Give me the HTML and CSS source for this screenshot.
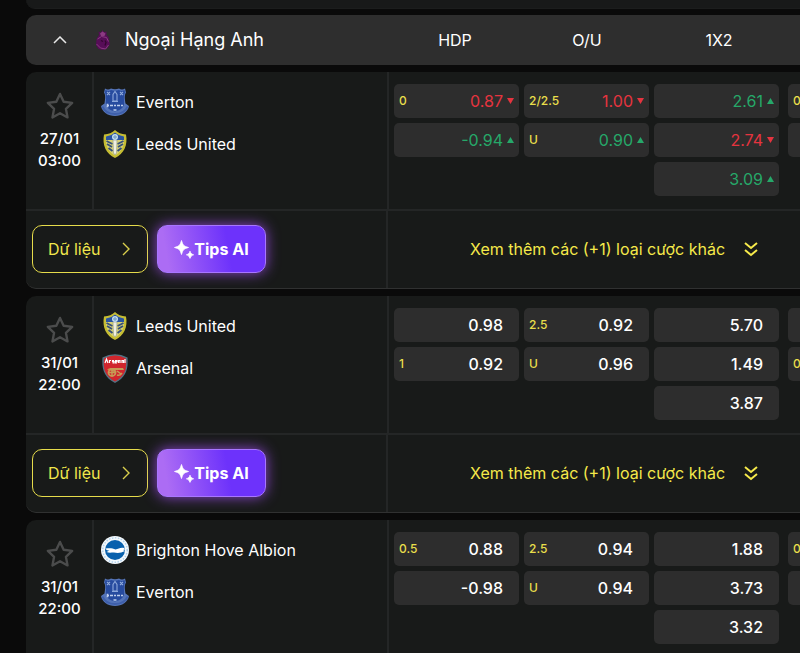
FILE: index.html
```
<!DOCTYPE html>
<html lang="vi">
<head>
<meta charset="utf-8">
<title>Ngoại Hạng Anh</title>
<link rel="stylesheet" href="styles.css">
</head>
<body>
<svg class="sprite" aria-hidden="true">
  <defs>
    <symbol id="star" viewBox="0 0 26 26"><path d="M13 1.800l3.400 7.300 7.900 1-5.800 5.500 1.500 8L13 19.700l-7 3.900 1.500-8L1.700 10.100l7.900-1z" fill="none" stroke="#4b4c4c" stroke-width="2.200" stroke-linejoin="round"/></symbol>
    <symbol id="up" viewBox="0 0 7 7"><path d="M3.500 0L7 6H0z"/></symbol>
    <symbol id="down" viewBox="0 0 7 7"><path d="M3.500 6L7 0H0z"/></symbol>
    <symbol id="right" viewBox="0 0 8 14"><path d="M1 1l6 6-6 6" fill="none" stroke="#d9cf4c" stroke-width="1.400"/></symbol>
    <symbol id="more" viewBox="0 0 14 16"><path d="M1 2l6 5 6-5M1 9l6 5 6-5" fill="none" stroke="#f5e94a" stroke-width="2"/></symbol>
    <symbol id="sparkle" viewBox="0 0 20 20"><path d="M7.500 1.500c1.300 4.600 2.400 5.700 7 7-4.600 1.300-5.700 2.400-7 7-1.300-4.600-2.400-5.700-7-7 4.600-1.300 5.700-2.400 7-7zM16 12.200c.8 2.200 1.400 2.800 3.600 3.600-2.200.8-2.800 1.400-3.600 3.600-.8-2.200-1.400-2.800-3.600-3.600 2.200-.8 2.800-1.400 3.600-3.600z" fill="#fff" stroke="#fff" stroke-width=".8" stroke-linejoin="round"/></symbol>
    <symbol id="everton" viewBox="0 0 30 30">
      <path d="M5 1.500q3 2 6 0 4 1.500 8 0 3 2 6 0l1 4c-2 3-1 7-.5 11l3.500 2.500c-1 6-7 10-14 10s-13-4-14-10l3.500-2.500C5 12.500 6 8.500 4 5.500z" fill="#5474b8"/>
      <path d="M5.500 3q3 2 5.500 0 4 1.600 8 0 2.500 2 5.500 0l.5 2.500c-2 4-.5 8-1 12-1 4-5 6-9 7-4-1-8-3-9-7-.5-4 1-8-1-12z" fill="#274b9f"/>
      <path d="M2.500 19.500c2 5 7 7.500 12.500 7.500s10.500-2.500 12.500-7.500" fill="none" stroke="#3e5fab" stroke-width="2"/>
      <path d="M13 14V7.500L15 4.500l2 3V14zM12 14.500h6M7 5l3 3M10 5L7 8m13-3l3 3m0-3l-3 3" fill="none" stroke="#8ea8da" stroke-width="1.100"/>
      <path d="M7 18.500h2m1 0h3m1 0h2m1 0h3m1 0h2M7.500 16.800v3.400m6 2.800h3" fill="none" stroke="#c0cfec" stroke-width="1.700"/>
    </symbol>
    <symbol id="leeds" viewBox="0 0 30 30">
      <path d="M4 5.500Q11 5 15 1q4 4 11 4.500C28 16 24 25 15 29 6 25 2 16 4 5.500z" fill="#c5bd32"/>
      <path d="M6 7.500Q11 7 15 3.500q4 3.500 9 4C25 15 22 23 15 26.500 8 23 5 15 6 7.500z" fill="#d8d173"/>
      <path d="M6 7.500Q11 7 15 3.500q4 3.500 9 4v3.500H6z" fill="#2a55a0"/>
      <path d="M6.500 12l6 3M7 15l5 3M8.500 19l4 3M23.500 12l-6 3M23 15l-5 3M21.500 19l-4 3" stroke="#35507b" stroke-width="1.900"/>
      <path d="M13 11h4l-.5 13-1.500 2-1.500-2z" fill="#efefe2" stroke="#8e9a82" stroke-width=".6"/>
      <circle cx="15" cy="8" r="3" fill="#c6def0"/><path d="M15 6v4m-2-2h4" stroke="#6997be"/>
    </symbol>
    <symbol id="arsenal" viewBox="0 0 30 30">
      <path d="M2.500 4.500Q15-2 27.500 4.500C28.500 16 26 24.500 15 30 4 24.500 1.500 16 2.500 4.500z" fill="#527384"/>
      <path d="M4 5.500Q15-.5 26 5.500C27 16 25 23 15 28.500 5 23 3 16 4 5.500z" fill="#d0262d"/>
      <path d="M5 10l1.500-4L8 10M9.500 10V7.500h1.500M14 7.500h-1.500v1.200H14V10h-1.500M15.500 8.700H17V7.500h-1.500V10H17M18.500 10V7.500H20V10M22 10V7.500h1.500V10M25 6v4" fill="none" stroke="#fff" stroke-width="1.200"/>
      <path d="M7 16.500q2-2 6-1.500h10l1 2H13l4 1-3 1-3-1.500z" fill="#c69b55"/>
      <circle cx="12" cy="19.500" r="3.500" fill="none" stroke="#c69b55" stroke-width="1.800"/>
      <path d="M12 16v7m-3.500-3.500h7M17 18l4 3m-4 1q3 1 5-2" fill="none" stroke="#c69b55" stroke-width="1.500"/>
    </symbol>
    <symbol id="brighton" viewBox="0 0 30 30">
      <circle cx="15" cy="15" r="14" fill="#f4f9fd"/><circle cx="15" cy="15" r="12.200" fill="none" stroke="#b3d3ec" stroke-width="1.500" stroke-dasharray="1.500 1.500"/>
      <circle cx="15" cy="15" r="10" fill="#0961ad"/>
      <path d="M5.500 13.500c4-.5 7-.5 10 1 3-.5 5-2.500 8.500-1.500l1 1.500-2 .5 2 1c-4 2-7 2.500-11 1.500-3 0-5 .5-7.500-.5l3-1.500c-2 0-3.500-.5-4-2z" fill="#fff"/>
    </symbol>
    <symbol id="lion" viewBox="0 0 18 22">
      <path d="M5 6L4.500 2.500l2.500 1L8.500 1l1.500 2.300 2.500-.8v3.500l2 2 .5 4 1 3-3 4.500-4 1.500-4.500-1-2.500-4 .5-6z" fill="#570d58"/>
      <path d="M6 4.500l2.500-2 3 2-1 2.500H7z" fill="#8b3b82"/>
      <path d="M3.500 10l4-2.500 5 1 2 4M2.500 15l4 4 5 1 3-4" fill="none" stroke="#8b3b82" stroke-width="1"/>
      <path d="M7 11.500l2 1m2-1l1 2-1 3" fill="none" stroke="#32082f" stroke-width="1.300"/>
    </symbol>
  </defs>
</svg>
<main class="board" id="board"></main>
<script src="board.js"></script>
</body>
</html>
```
FILE: board.js
```
const matches = [
  { day: "27/01", time: "03:00", teams: [["everton", "Everton"], ["leeds", "Leeds United"]],
    odds: [[["0", "0.87", "down"], ["", "-0.94", "up"]],
           [["2/2.5", "1.00", "down"], ["U", "0.90", "up"]],
           [["", "2.61", "up"], ["", "2.74", "down"], ["", "3.09", "up"]],
           [["0", ""], ["", ""]]] },
  { day: "31/01", time: "22:00", teams: [["leeds", "Leeds United"], ["arsenal", "Arsenal"]],
    odds: [[["", "0.98"], ["1", "0.92"]],
           [["2.5", "0.92"], ["U", "0.96"]],
           [["", "5.70"], ["", "1.49"], ["", "3.87"]],
           [["", ""], ["0", ""]]] },
  { day: "31/01", time: "22:00", teams: [["brighton", "Brighton Hove Albion"], ["everton", "Everton"]],
    odds: [[["0.5", "0.88"], ["", "-0.98"]],
           [["2.5", "0.94"], ["U", "0.94"]],
           [["", "1.88"], ["", "3.73"], ["", "3.32"]],
           [["0", ""], ["", ""]]] }
];

const icon = (id, cls) => `<svg class="${cls}" aria-hidden="true"><use href="#${id}"/></svg>`;

const cell = ([line, price, move]) =>
  `<button class="odd ${move || ""}"><span class="line">${line}</span><span class="price">${price}</span><span class="move">${move ? icon(move, "arrow") : ""}</span></button>`;

const card = m => `
<article class="card">
  <div class="match">
    <div class="when"><button class="fav" aria-label="Yêu thích">${icon("star", "star")}</button><time>${m.day}<br>${m.time}</time></div>
    <ul class="teams">${m.teams.map(([id, name]) => `<li>${icon(id, "crest")}${name}</li>`).join("")}</ul>
    <div class="odds">${m.odds.map(g => `<div class="group">${g.map(cell).join("")}</div>`).join("")}</div>
  </div>
  <div class="actions">
    <div class="buttons">
      <button class="data">Dữ liệu${icon("right", "chevron")}</button>
      <button class="tips">${icon("sparkle", "sparkle")}Tips AI</button>
    </div>
    <a class="more" href="#board">Xem thêm các (+1) loại cược khác${icon("more", "double")}</a>
  </div>
</article>`;

document.getElementById("board").innerHTML = `
<div class="previous"></div>
<header class="league">
  <button class="collapse" aria-label="Thu gọn"><svg class="caret" viewBox="0 0 14 8"><path d="M1 7l6-6 6 6" fill="none" stroke="#e8e8e8" stroke-width="1.500"/></svg></button>
  <h1>${icon("lion", "lion")}Ngoại Hạng Anh</h1>
  <div class="markets"><span>HDP</span><span>O/U</span><span>1X2</span></div>
</header>
${matches.map(card).join("")}`;
```
FILE: styles.css
```
* { box-sizing: border-box; }
html { height: 100%; overflow: hidden; background: #0a0a0a; }
body { margin: 0; height: 100%; overflow: hidden; color: #fff; font: 400 16px/22px Inter, "Noto Sans", sans-serif; }
button { margin: 0; padding: 0; border: 0; background: none; color: inherit; font: inherit; cursor: pointer; }
svg { display: block; flex: none; }
.sprite { position: absolute; width: 0; height: 0; }

.board { display: flex; flex-direction: column; gap: 7px; margin-left: 26px; }
.previous { height: 9px; margin-bottom: -1px; background: #181919; border-bottom: 1px solid #1c1d1d; border-radius: 0 0 0 10px; }

.league { display: flex; align-items: center; height: 50px; background: #2e2e2e; border-radius: 10px 0 0 10px; }
.collapse { display: grid; place-items: center; width: 68px; height: 50px; }
.caret { width: 14px; height: 8px; }
.league h1 { display: flex; flex: 1; align-items: center; gap: 13px; margin: 0; font-size: 18px; font-weight: 400; line-height: 24px; white-space: nowrap; }
.lion { width: 18px; height: 22px; }
.markets { display: flex; width: 411px; text-align: center; }
.markets span { width: 132px; }

.card { overflow: hidden; background: #181a19; border-bottom: 1px solid #303131; border-radius: 10px 0 0 10px; }
.match { display: flex; height: 137px; }
.when { display: flex; flex-direction: column; align-items: center; gap: 8px; width: 68px; padding: 20px 0 0 1px; border-right: 2px solid #242626; font-size: 15px; font-weight: 500; text-align: center; }
.star { width: 28px; height: 28px; }
.teams { display: flex; flex: 1; flex-direction: column; gap: 12px; margin: 0; padding: 15px 0 0 6px; list-style: none; }
.teams li { display: flex; align-items: center; gap: 6px; height: 30px; white-space: nowrap; }
.crest { width: 30px; height: 30px; }
.odds { display: flex; gap: 5px; width: 413px; padding: 12px 0 0 5px; border-left: 2px solid #242626; overflow: hidden; }
.group { display: flex; flex: none; flex-direction: column; gap: 5px; width: 125px; }
.group:last-child { margin-left: 4px; }
.odd { display: flex; align-items: center; height: 34px; padding: 0 5px; border-radius: 5px; background: #2d2d2d; }
.line { flex: 1; color: #e9df4b; font-size: 12px; font-weight: 500; text-align: left; }
.price { margin-right: 4px; font-weight: 500; }
.up .price, .down .price { font-weight: 400; }
.move { width: 7px; }
.arrow { width: 7px; height: 7px; fill: currentColor; }
.up { color: #26a869; }
.down { color: #e5343f; }

.actions { display: flex; height: 79px; border-top: 2px solid #242626; }
.buttons { display: flex; flex: 1; align-items: flex-start; gap: 9px; padding: 14px 0 0 6px; }
.data, .tips { display: flex; align-items: center; height: 48px; border: 1px solid; border-radius: 10px; }
.data { justify-content: space-between; width: 116px; padding: 0 17px 0 15px; border-color: #e6dc4b; color: #f0e64c; }
.chevron { width: 8px; height: 14px; }
.tips { justify-content: center; width: 109px; border-color: #a876ff; background: linear-gradient(80deg, #ac6cf4 10%, #6d32fb 65%); box-shadow: 0 0 14px #8d46d0; font-weight: 700; }
.sparkle { width: 20px; height: 20px; }
.more { display: flex; align-items: center; gap: 19px; width: 414px; padding: 0 0 2px 82px; border-left: 2px solid #242626; color: #f5e94a; text-decoration: none; white-space: nowrap; }
.double { width: 14px; height: 16px; }
```
